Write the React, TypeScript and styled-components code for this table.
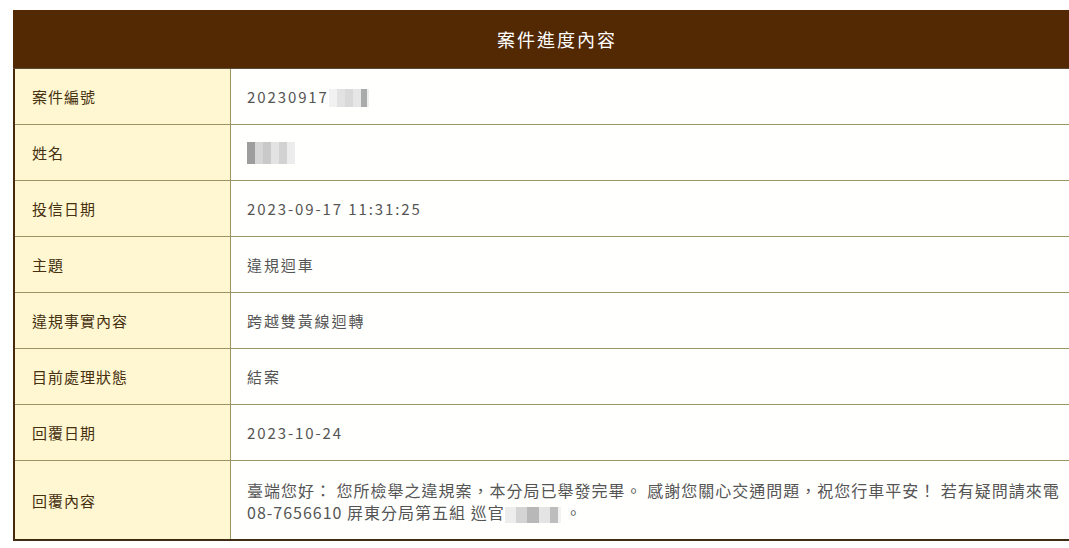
import React from "react";
import styled, { createGlobalStyle } from "styled-components";

const Global = createGlobalStyle`
  html, body { margin: 0; padding: 0; background: #ffffff; overflow: hidden; }
  body { font-family: "Noto Sans CJK TC", "Noto Sans", sans-serif; }
`;

const Page = styled.div`
  padding: 10px 0 0 13px;
  width: 1200px;
`;

const Table = styled.div`
  width: 1088px;
  border-left: 2px solid #4a2a0c;
  border-right: 2px solid #4a2a0c;
  border-bottom: 2px solid #3f2a14;
  box-sizing: border-box;
`;

const Header = styled.div`
  height: 59px;
  background: #532904;
  color: #ffffff;
  display: flex;
  align-items: center;
  justify-content: center;
  font-size: 18px;
  letter-spacing: 2px;
  margin-left: -2px;
  margin-right: -2px;
  border-bottom: 1px solid #5a4a3a;
  box-sizing: border-box;
`;

const Row = styled.div<{ $h: number; $last?: boolean }>`
  display: grid;
  grid-template-columns: 216px 1fr;
  height: ${(p) => p.$h}px;
  border-bottom: ${(p) => (p.$last ? "none" : "1px solid #9c9462")};
  box-sizing: border-box;
`;

const Label = styled.div`
  background: #fff7d2;
  border-right: 1px solid #9c9462;
  display: flex;
  align-items: center;
  padding-left: 17px;
  color: #46300f;
  font-size: 15px;
  letter-spacing: 1px;
`;

const Value = styled.div`
  background: #fffffd;
  display: flex;
  align-items: center;
  padding: 0 10px 0 16px;
  color: #555555;
  font-size: 15px;
  letter-spacing: 1.9px;
  line-height: 22px;
`;

const Para = styled.div`
  font-size: 16px;
  letter-spacing: 1px;
  line-height: 22px;
  margin-top: 2px;
`;

const Mosaic = styled.span<{ $w: number; $h: number; $cols: string }>`
  display: inline-block;
  vertical-align: middle;
  width: ${(p) => p.$w}px;
  height: ${(p) => p.$h}px;
  background: ${(p) => p.$cols};
`;

const idBlur =
  "linear-gradient(90deg, #f1f1f1 0 20%, #e2e2e2 20% 40%, #d9d9d9 40% 60%, #e6e6e6 60% 80%, #a9abaa 80% 95%, #eeeeee 95%)";
const nameBlur =
  "linear-gradient(90deg, #9d9d9d 0 16%, #d6d6d6 16% 33%, #c9c9c9 33% 50%, #e3e3e3 50% 66%, #d2d2d2 66% 83%, #ececec 83%)";
const offBlur =
  "linear-gradient(90deg, #ededed 0 20%, #d4d4d4 20% 40%, #b8b8b8 40% 60%, #e4e4e4 60% 80%, #bdbdbd 80% 95%, #f2f2f2 95%)";

const rows: { label: string; value: React.ReactNode; h: number }[] = [
  {
    label: "案件編號",
    value: (
      <span>
        20230917
        <Mosaic $w={40} $h={18} $cols={idBlur} />
      </span>
    ),
    h: 56,
  },
  { label: "姓名", value: <Mosaic $w={48} $h={22} $cols={nameBlur} />, h: 56 },
  { label: "投信日期", value: "2023-09-17 11:31:25", h: 56 },
  { label: "主題", value: "違規迴車", h: 56 },
  { label: "違規事實內容", value: "跨越雙黃線迴轉", h: 56 },
  { label: "目前處理狀態", value: "結案", h: 56 },
  { label: "回覆日期", value: "2023-10-24", h: 56 },
];

export default function App() {
  return (
    <>
      <Global />
      <Page>
        <Table>
          <Header>案件進度內容</Header>
          {rows.map((r) => (
            <Row key={r.label} $h={r.h}>
              <Label>{r.label}</Label>
              <Value>{r.value}</Value>
            </Row>
          ))}
          <Row $h={78} $last>
            <Label>回覆內容</Label>
            <Value>
              <Para>
                臺端您好： 您所檢舉之違規案，本分局已舉發完畢。 感謝您關心交通問題，祝您行車平安！ 若有疑問請來電
                <br />
                08-7656610 屏東分局第五組 巡官
                <Mosaic $w={56} $h={16} $cols={offBlur} /> 。
              </Para>
            </Value>
          </Row>
        </Table>
      </Page>
    </>
  );
}
